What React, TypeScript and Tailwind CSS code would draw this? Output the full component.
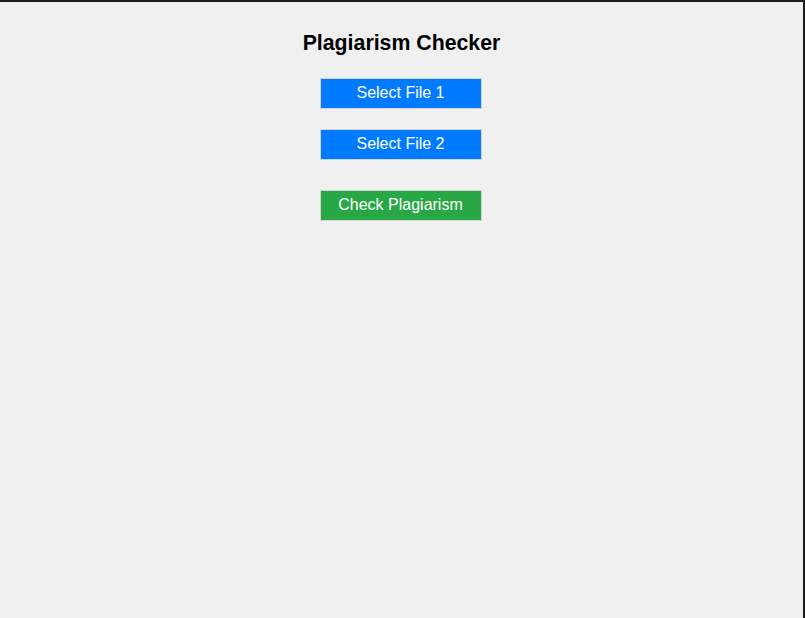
export default function App() {
  const font = { fontFamily: '"Liberation Sans", Arial, sans-serif' };
  return (
    <div
      className="h-[618px] w-full bg-[#f0f0f0] border-t-2 border-r-2 border-[#1c1c1c] flex flex-col items-center pt-[29px] font-['Liberation_Sans',Arial,sans-serif]"
      style={font}
    >
      <h1 className="text-[21.3px] leading-[24px] font-bold text-black">Plagiarism Checker</h1>
      <button className="mt-[23px] mr-[2px] w-[162px] h-[31px] pb-[2px] border border-[#d3d3d3] bg-[#007bff] text-white text-[16px] leading-[18px]">
        Select File 1
      </button>
      <button className="mt-[20px] mr-[2px] w-[162px] h-[31px] pb-[2px] border border-[#d3d3d3] bg-[#007bff] text-white text-[16px] leading-[18px]">
        Select File 2
      </button>
      <button className="mt-[30px] mr-[2px] w-[162px] h-[31px] pb-[2px] border border-[#d3d3d3] bg-[#28a745] text-white text-[16px] leading-[18px]">
        Check Plagiarism
      </button>
    </div>
  );
}
